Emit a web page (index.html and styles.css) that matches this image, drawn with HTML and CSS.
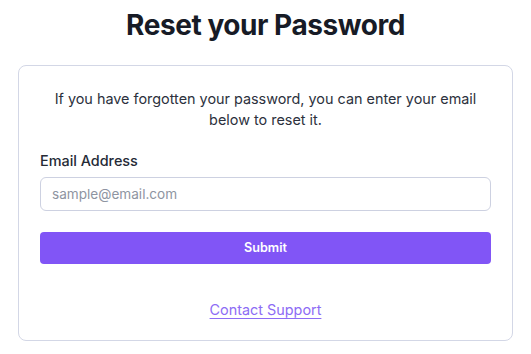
FILE: index.html
```html
<!DOCTYPE html>
<html lang="en">
<head>
<meta charset="utf-8">
<title>Reset your Password</title>
<link rel="stylesheet" href="styles.css">
</head>
<body>
<main class="page">
  <h1 class="title">Reset your Password</h1>
  <section class="card">
    <p class="intro">If you have forgotten your password, you can enter your email below to reset it.</p>
    <form class="form">
      <label class="label" for="email">Email Address</label>
      <input class="input" id="email" type="email" placeholder="sample@email.com">
      <button class="button" type="button">Submit</button>
    </form>
    <div class="support"><a class="link" href="#">Contact Support</a></div>
  </section>
</main>
</body>
</html>
```

FILE: styles.css
```css
* { box-sizing: border-box; }
html, body { margin: 0; background: #ffffff; }
body {
  font-family: Inter, "Noto Sans", "Liberation Sans", sans-serif;
  color: #1f2430;
}
.page {
  padding: 0 18px;
}
.title {
  margin: 8px 0 23px;
  font-size: 28px;
  line-height: 34px;
  font-weight: 700;
  text-align: center;
  color: #171b26;
  letter-spacing: -0.45px;
}
.card {
  border: 1px solid #d3d7e6;
  border-radius: 8px;
  padding: 22px 21px 19px;
}
.intro {
  margin: 0;
  font-size: 14.4px;
  line-height: 21px;
  text-align: center;
  color: #2c313d;
}
.form {
  display: flex;
  flex-direction: column;
  margin-top: 21px;
}
.label {
  font-size: 14.4px;
  line-height: 20.5px;
  font-weight: 500;
  color: #252a36;
  margin-bottom: 5px;
}
.input {
  height: 34px;
  border: 1px solid #cdd1e1;
  border-radius: 6px;
  padding: 0 11px;
  font-family: inherit;
  font-size: 13.6px;
  color: #252a36;
  outline: none;
}
.input::placeholder { color: #8e94a1; }
.button {
  margin-top: 21px;
  height: 32px;
  border: none;
  border-radius: 4px;
  background: #8155f6;
  color: #ffffff;
  font-family: inherit;
  font-size: 12.6px;
  font-weight: 600;
}
.support {
  margin-top: 36.5px;
  text-align: center;
  font-size: 14.4px;
  line-height: 20.5px;
}
.link {
  color: #8d6cf5;
  text-decoration: underline;
  text-underline-offset: 3px;
}
```
